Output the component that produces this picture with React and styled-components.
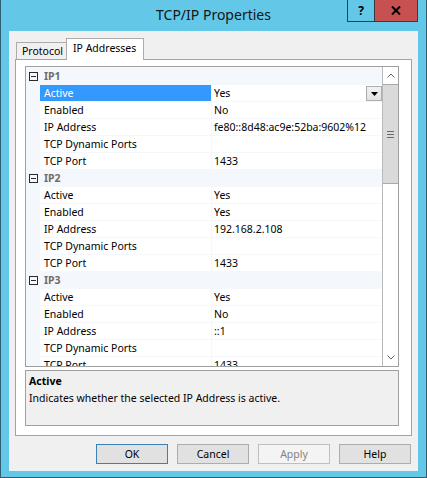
import React from "react";
import styled, { createGlobalStyle } from "styled-components";

const GlobalStyle = createGlobalStyle`
  html, body { margin: 0; padding: 0; background: #fff; }
  body { font-family: "Noto Sans", "Segoe UI", sans-serif; color: #000; }
  * { box-sizing: border-box; }
`;

const FONT = `"Noto Sans", "Segoe UI", sans-serif`;
const LINE = "#f4f7fc";

const Window = styled.div`
  width: 427px;
  height: 478px;
  background: #63c8e8;
  border: 1px solid #2d5e72;
  border-top: none;
  padding: 0 8px 6px 8px;
  display: flex;
  flex-direction: column;
`;

const TitleBar = styled.div`
  flex: none;
  height: 31px;
  display: grid;
  grid-template-columns: 1fr auto 1fr;
`;

const Title = styled.div`
  grid-column: 2;
  font-size: 14px;
  line-height: 20px;
  padding-top: 5px;
  color: #141414;
  white-space: nowrap;
`;

const CaptionButtons = styled.div`
  grid-column: 3;
  justify-self: end;
  align-self: start;
  display: flex;
  height: 22px;
  border: 1px solid #383c3e;
  border-top: none;
`;

const CaptionButton = styled.div`
  width: ${(p) => p.$w}px;
  background: ${(p) => p.$bg};
  display: flex;
  align-items: center;
  justify-content: center;
  font-size: 12px;
  font-weight: 700;
  color: #000;
  & + & {
    border-left: 1px solid #383c3e;
  }
`;

const Client = styled.div`
  flex: 1;
  min-height: 0;
  background: #f0f0f0;
  padding: 7px 6px 7px 6px;
  display: flex;
  flex-direction: column;
`;

const TabStrip = styled.div`
  flex: none;
  height: 21px;
  display: flex;
  align-items: flex-end;
  padding-left: 1px;
  position: relative;
  z-index: 1;
`;

const Tab = styled.div`
  width: ${(p) => p.$w}px;
  height: ${(p) => (p.$active ? 22 : 17)}px;
  margin-bottom: ${(p) => (p.$active ? -1 : 0)}px;
  background: ${(p) => (p.$active ? "#fff" : "#f0f0f0")};
  border: 1px solid #acacac;
  border-bottom: none;
  border-right: ${(p) => (p.$active ? "1px solid #acacac" : "none")};
  font-size: 10.5px;
  line-height: ${(p) => (p.$active ? 19 : 16)}px;
  padding-left: ${(p) => (p.$active ? 6 : 5)}px;
  white-space: nowrap;
`;

const TabPanel = styled.div`
  flex: 1;
  min-height: 0;
  background: #fff;
  border: 1px solid #a3a3a3;
  padding: 6px 12px 9px 9px;
  display: flex;
  flex-direction: column;
  gap: 3px;
`;

const Grid = styled.div`
  flex: 1;
  min-height: 0;
  border: 1px solid #a0a0a0;
  background: #fff;
  display: flex;
  overflow: hidden;
`;

const GridBody = styled.div`
  flex: 1;
  overflow: hidden;
  font-size: 10.5px;
`;

const Row = styled.div`
  display: grid;
  grid-template-columns: 14px 172px 1fr;
  height: 17px;
  background: ${(p) => (p.$category ? LINE : "#fff")};
`;

const Gutter = styled.div`
  background: ${LINE};
  display: flex;
  align-items: center;
  padding: 1px 0 0 3px;
`;

const ExpandBox = styled.div`
  width: 9px;
  height: 9px;
  border: 1px solid #2b2b2b;
  display: flex;
  align-items: center;
  justify-content: center;
  &::after {
    content: "";
    width: 5px;
    height: 1px;
    background: #2b2b2b;
  }
`;

const CategoryName = styled.div`
  grid-column: 2 / 4;
  padding: 1px 0 0 4px;
  line-height: 16px;
  font-weight: 700;
  color: #6d6d6d;
`;

const NameCell = styled.div`
  border-top: 1px solid ${LINE};
  border-right: 1px solid ${LINE};
  padding-left: 4px;
  line-height: 16px;
  white-space: nowrap;
  overflow: hidden;
  background: ${(p) => (p.$selected ? "#3399ff" : "transparent")};
  color: ${(p) => (p.$selected ? "#fff" : "#000")};
`;

const ValueCell = styled.div`
  border-top: 1px solid ${LINE};
  padding-left: 2px;
  line-height: 16px;
  white-space: nowrap;
  overflow: hidden;
  display: flex;
  justify-content: space-between;
  align-items: flex-start;
`;

const DropButton = styled.div`
  width: 16px;
  height: 15px;
  margin: 1px 0 0 0;
  border: 1px solid #acacac;
  background: linear-gradient(#f2f2f2, #e3e3e3);
  display: flex;
  align-items: center;
  justify-content: center;
`;

const ScrollBar = styled.div`
  flex: none;
  width: 16px;
  border-left: 1px solid #b9b9b9;
  background: #fff;
  display: flex;
  flex-direction: column;
`;

const ScrollArrow = styled.div`
  flex: none;
  height: 17px;
  display: flex;
  align-items: center;
  justify-content: center;
  background: #fff;
`;

const Thumb = styled.div`
  flex: none;
  height: 100px;
  background: #dadada;
  border-top: 1px solid #a9a9a9;
  border-bottom: 1px solid #a9a9a9;
  display: flex;
  align-items: center;
  justify-content: center;
`;

const Track = styled.div`
  flex: 1;
`;

const HelpPane = styled.div`
  flex: none;
  height: 56px;
  border: 1px solid #a0a0a0;
  background: #f0f0f0;
  padding: 2px 3px;
  font-size: 10.5px;
  line-height: 16px;
`;

const HelpTitle = styled.div`
  font-weight: 700;
`;

const HelpText = styled.div`
  margin-top: 1px;
`;

const ButtonRow = styled.div`
  flex: none;
  display: flex;
  justify-content: flex-end;
  gap: 9px;
  margin-top: 8px;
  padding-right: 1px;
`;

const Button = styled.button`
  width: 72px;
  height: 20px;
  padding: 0;
  font-family: ${FONT};
  font-size: 10.5px;
  background: ${(p) => (p.disabled ? "#f4f4f4" : "#e1e1e1")};
  border: 1px solid
    ${(p) => (p.$default ? "#3c7fb1" : p.disabled ? "#bfbfbf" : "#adadad")};
  color: ${(p) => (p.disabled ? "#838383" : "#000")};
`;

const groups = [
  {
    name: "IP1",
    props: [
      ["Active", "Yes"],
      ["Enabled", "No"],
      ["IP Address", "fe80::8d48:ac9e:52ba:9602%12"],
      ["TCP Dynamic Ports", ""],
      ["TCP Port", "1433"],
    ],
  },
  {
    name: "IP2",
    props: [
      ["Active", "Yes"],
      ["Enabled", "Yes"],
      ["IP Address", "192.168.2.108"],
      ["TCP Dynamic Ports", ""],
      ["TCP Port", "1433"],
    ],
  },
  {
    name: "IP3",
    props: [
      ["Active", "Yes"],
      ["Enabled", "No"],
      ["IP Address", "::1"],
      ["TCP Dynamic Ports", ""],
      ["TCP Port", "1433"],
    ],
  },
];

function Chevron({ up }) {
  return (
    <svg width="8" height="5" viewBox="0 0 8 5">
      <polyline
        points={up ? "0.5,4.5 4,1 7.5,4.5" : "0.5,0.5 4,4 7.5,0.5"}
        fill="none"
        stroke="#606060"
        strokeWidth="1"
      />
    </svg>
  );
}

function Grip() {
  return (
    <svg width="7" height="7" viewBox="0 0 7 7">
      <rect x="0" y="0" width="7" height="1" fill="#6a6a6a" />
      <rect x="0" y="3" width="7" height="1" fill="#6a6a6a" />
      <rect x="0" y="6" width="7" height="1" fill="#6a6a6a" />
    </svg>
  );
}

export default function App() {
  return (
    <>
      <GlobalStyle />
      <Window>
        <TitleBar>
          <Title>TCP/IP Properties</Title>
          <CaptionButtons>
            <CaptionButton $w={26} $bg="#63c8e8">?</CaptionButton>
            <CaptionButton $w={43} $bg="#c75050">
              <svg width="10" height="9" viewBox="0 0 10 9">
                <path d="M1 0.5 L9 8.5 M9 0.5 L1 8.5" stroke="#000" strokeWidth="2" />
              </svg>
            </CaptionButton>
          </CaptionButtons>
        </TitleBar>
        <Client>
          <TabStrip>
            <Tab $w={50}>Protocol</Tab>
            <Tab $w={78} $active>
              IP Addresses
            </Tab>
          </TabStrip>
          <TabPanel>
            <Grid>
              <GridBody>
                {groups.map((g, gi) => (
                  <React.Fragment key={g.name}>
                    <Row $category>
                      <Gutter>
                        <ExpandBox />
                      </Gutter>
                      <CategoryName>{g.name}</CategoryName>
                    </Row>
                    {g.props.map(([name, value], pi) => {
                      const selected = gi === 0 && pi === 0;
                      return (
                        <Row key={name}>
                          <Gutter />
                          <NameCell $selected={selected}>{name}</NameCell>
                          <ValueCell>
                            <span>{value}</span>
                            {selected && (
                              <DropButton>
                                <svg width="7" height="4" viewBox="0 0 7 4">
                                  <polygon points="0,0 7,0 3.5,4" fill="#000" />
                                </svg>
                              </DropButton>
                            )}
                          </ValueCell>
                        </Row>
                      );
                    })}
                  </React.Fragment>
                ))}
              </GridBody>
              <ScrollBar>
                <ScrollArrow>
                  <Chevron up />
                </ScrollArrow>
                <Thumb>
                  <Grip />
                </Thumb>
                <Track />
                <ScrollArrow>
                  <Chevron />
                </ScrollArrow>
              </ScrollBar>
            </Grid>
            <HelpPane>
              <HelpTitle>Active</HelpTitle>
              <HelpText>Indicates whether the selected IP Address is active.</HelpText>
            </HelpPane>
          </TabPanel>
          <ButtonRow>
            <Button $default>OK</Button>
            <Button>Cancel</Button>
            <Button disabled>Apply</Button>
            <Button>Help</Button>
          </ButtonRow>
        </Client>
      </Window>
    </>
  );
}
